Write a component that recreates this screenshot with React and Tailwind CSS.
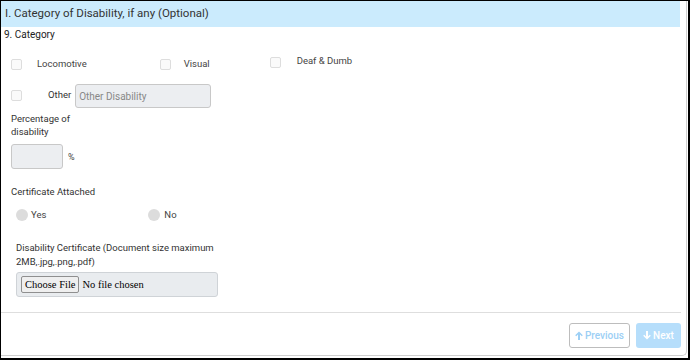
function Arrow({ down }) {
  return (
    <svg width="8" height="9" viewBox="0 0 8 9" className="mr-[2px]" fill="currentColor">
      {down ? (
        <path d="M3 0h2v5.5l1.8-1.8 1 1L4 8.5 0.2 4.7l1-1L3 5.5z" />
      ) : (
        <path d="M3 9h2V3.5l1.8 1.8 1-1L4 0.5 0.2 4.3l1 1L3 3.5z" />
      )}
    </svg>
  );
}

export default function App() {
  const font = { fontFamily: "Roboto, 'Liberation Sans', sans-serif" };
  return (
    <div className="w-[690px] h-[360px] bg-black pl-px pt-px overflow-hidden">
      <div className="w-[687px] h-[357px] bg-white">
        <div
          className="w-[686px] h-[355px] border-r border-b border-[#cfcfcf] rounded-br-[5px] text-[#333] relative"
          style={font}
        >
          {/* Section header */}
          <div className="w-[679px] h-[26px] bg-[#cbebfd] flex items-center pl-[4px] text-[11.5px] text-[#333]">
            I. Category of Disability, if any (Optional)
          </div>

          {/* 9. Category */}
          <div className="pl-[3px] pt-[1px] text-[10px] leading-[14px] text-[#222]">9. Category</div>

          {/* checkbox row */}
          <div className="flex items-center h-[12px] mt-[16px] text-[9.5px] text-[#444]">
            <span className="ml-[10px] w-[11px] h-[11px] border border-[#ddd] rounded-[2px] bg-[#fafafa]" />
            <span className="ml-[15px]">Locomotive</span>
            <span className="ml-[73px] w-[11px] h-[11px] border border-[#ddd] rounded-[2px] bg-[#fafafa]" />
            <span className="ml-[13px]">Visual</span>
            <span className="ml-[60px] -mt-[4px] w-[11px] h-[11px] border border-[#ddd] rounded-[2px] bg-[#fafafa]" />
            <span className="ml-[16px] -mt-[6px]">Deaf &amp; Dumb</span>
          </div>

          {/* Other row */}
          <div className="flex items-center mt-[14px] h-[24px] text-[9.5px]">
            <span className="ml-[10px] mt-[-1px] w-[11px] h-[11px] border border-[#ddd] rounded-[2px] bg-[#fafafa]" />
            <span className="ml-[26px] -mt-[2px] text-[#333]">Other</span>
            <div className="ml-[4px] w-[136px] h-[24px] bg-[#eceef1] border border-[#c8c8c8] rounded-[3px] flex items-center pl-[3px] text-[10px] text-[#888]">
              Other Disability
            </div>
          </div>

          {/* Percentage */}
          <div className="ml-[10px] mt-[4px] text-[9.5px] leading-[13px] text-[#333]">
            Percentage of
            <br />
            disability
          </div>
          <div className="flex items-center mt-[6px]">
            <div className="ml-[10px] w-[52px] h-[25px] bg-[#eceef1] border border-[#c8c8c8] rounded-[3px]" />
            <span className="ml-[5px] mt-[2px] text-[9px] text-[#444]">%</span>
          </div>

          {/* Certificate Attached */}
          <div className="ml-[10px] mt-[16px] text-[9.5px] leading-[14px] text-[#333]">Certificate Attached</div>
          <div className="flex items-center mt-[10px] h-[12px] text-[9.5px] text-[#444]">
            <span className="ml-[15px] w-[12px] h-[12px] rounded-full bg-[#dcdcdc]" />
            <span className="ml-[3px]">Yes</span>
            <span className="ml-[102px] w-[12px] h-[12px] rounded-full bg-[#dcdcdc]" />
            <span className="ml-[4px]">No</span>
          </div>

          {/* Disability Certificate */}
          <div className="ml-[15px] mt-[20px] text-[9.5px] leading-[14px] text-[#333]">
            Disability Certificate (Document size maximum
            <br />
            2MB,.jpg,.png,.pdf)
          </div>
          <div className="ml-[15px] mt-[3px] w-[202px] h-[25px] bg-[#e9ecef] border border-[#cfd3d7] rounded-[3px] flex items-center pl-[4px]">
            <span
              className="h-[17px] px-[3px] border border-[#8f8f8f] rounded-[2px] bg-[#efefef] text-[10.5px] leading-[15px] text-black"
              style={{ fontFamily: "'Liberation Serif', serif" }}
            >
              Choose File
            </span>
            <span
              className="ml-[3px] text-[10.5px] text-black"
              style={{ fontFamily: "'Liberation Serif', serif" }}
            >
              No file chosen
            </span>
          </div>

          {/* divider */}
          <div className="mt-[15px] w-[680px] h-px bg-[#dedede]" />

          {/* buttons */}
          <div className="flex justify-end w-[680px] mt-[10px] gap-[6px]">
            <div className="w-[61px] h-[25px] border border-[#bdbdbd] rounded-[3px] flex items-center justify-center text-[10px] font-medium text-[#9ccff5]">
              <Arrow />
              Previous
            </div>
            <div className="w-[45px] h-[25px] bg-[#b6defb] rounded-[3px] flex items-center justify-center text-[10px] font-medium text-white">
              <Arrow down />
              Next
            </div>
          </div>
        </div>
      </div>
    </div>
  );
}
